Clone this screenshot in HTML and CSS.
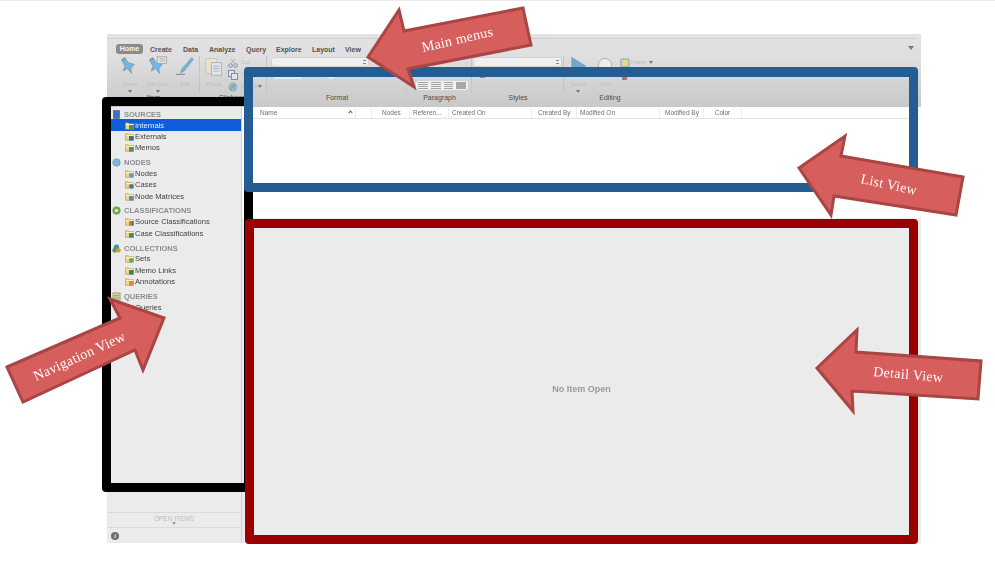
FILE: index.html
```html
<!DOCTYPE html>
<html lang="en">
<head>
<meta charset="utf-8">
<title>Workspace overview</title>
<link rel="stylesheet" href="styles.css">
</head>
<body>
<svg class="sprite" width="0" height="0" aria-hidden="true">
  <symbol id="folder" viewBox="0 0 10 10">
    <path d="M.5 2h3.2l.8 1h5v6.2H.5z" fill="#f3d57a" stroke="#9a8a5a" stroke-width=".6"/>
    <rect x="1" y="3.4" width="8.400" height="1.100" fill="#fff2c4"/>
  </symbol>
  <symbol id="pin" viewBox="0 0 24 24">
    <path d="M2 5l5-1 3 4 7 2-4 5 1 6-5-6-5 3 2-6z" fill="#62afe4" stroke="#4f7894" stroke-width=".7"/>
    <path d="M2 5c1-2 4-3 5-2" fill="none" stroke="#555" stroke-width="1.200"/>
  </symbol>
</svg>

<div class="window">
  <header class="ribbon">
    <div class="strip"><span class="collapse"></span></div>
    <nav class="tabs">
      <span class="tab active">Home</span>
      <span class="tab t-create">Create</span>
      <span class="tab t-data">Data</span>
      <span class="tab t-analyze">Analyze</span>
      <span class="tab t-query">Query</span>
      <span class="tab t-explore">Explore</span>
      <span class="tab t-layout">Layout</span>
      <span class="tab t-view">View</span>
    </nav>
    <div class="groups">
      <section class="group g-item">
        <div class="tools">
          <div class="tool">
            <svg class="big" viewBox="0 0 24 24"><use href="#pin"/></svg>
            <span class="tlabel">Open</span><span class="caret"></span>
          </div>
          <div class="tool">
            <svg class="big" viewBox="0 0 24 24">
              <use href="#pin"/>
              <rect x="11" y="1" width="11" height="8" fill="#e4e4e4" stroke="#8a8a8a" stroke-width=".8"/>
              <path d="M14 3.500h6M14 6h6" stroke="#8a8a8a" stroke-width=".8"/>
            </svg>
            <span class="tlabel">Get Info</span><span class="caret"></span>
          </div>
          <div class="tool">
            <svg class="big" viewBox="0 0 24 24">
              <path d="M20 2l2 2-11 14-4 2 1-4z" fill="#62afe4" stroke="#4f7894" stroke-width=".7"/>
              <path d="M1 22h11" stroke="#666" stroke-width="1"/>
            </svg>
            <span class="tlabel">Edit</span>
          </div>
        </div>
        <div class="glabel">Item</div>
      </section>
      <section class="group g-clip">
        <div class="tools">
          <div class="tool">
            <svg class="big faded" viewBox="0 0 24 24">
              <rect x="2" y="3" width="14" height="18" rx="1" fill="#eee6c4" stroke="#b7b09a"/>
              <rect x="9" y="8" width="12" height="15" fill="#e8eef4" stroke="#7f93ad"/>
              <path d="M11 12h8M11 15h8M11 18h8" stroke="#7f93ad"/>
            </svg>
            <span class="tlabel">Paste</span>
          </div>
          <div class="smalls">
            <div class="small">
              <svg class="faded" viewBox="0 0 10 10"><circle cx="2.500" cy="7.500" r="1.800" fill="none" stroke="#556a86"/><circle cx="7.500" cy="7.500" r="1.800" fill="none" stroke="#556a86"/><path d="M3 6l4-5M7 6L3 1" stroke="#8a8a8a" stroke-width=".7"/></svg>
              <span class="tlabel">Cut</span>
            </div>
            <div class="small">
              <svg class="faded" viewBox="0 0 10 10"><rect x=".5" y=".5" width="6" height="6" fill="#e8eef4" stroke="#556a86"/><rect x="3.500" y="3.500" width="6" height="6" fill="#e8eef4" stroke="#556a86"/></svg>
              <span class="tlabel">Copy</span>
            </div>
            <div class="small">
              <svg class="faded" viewBox="0 0 10 10"><circle cx="5" cy="5" r="4.500" fill="#6fa8c8"/><path d="M2 8l5-6" stroke="#6a9a55" stroke-width="1.600"/></svg>
              <span class="tlabel">Merge</span><span class="caret dark pull"></span>
            </div>
          </div>
        </div>
        <div class="glabel">Clipboard</div>
      </section>
      <section class="group g-format">
        <div class="tools">
          <div class="stack">
            <div class="combo"><span class="spin"></span></div>
            <div class="btnrow"><span class="btn b-wide"></span><span class="btn b-narrow"></span></div>
          </div>
        </div>
        <div class="glabel">Format</div>
      </section>
      <section class="group g-para">
        <div class="tools">
          <div class="segs">
            <span class="seg"></span><span class="seg"></span><span class="seg"></span><span class="seg on"></span>
          </div>
        </div>
        <div class="glabel">Paragraph</div>
      </section>
      <section class="group g-styles">
        <div class="tools">
          <div class="stack">
            <div class="combo"><span class="spin"></span></div>
            <span class="mark m-blue"></span>
          </div>
        </div>
        <div class="glabel">Styles</div>
      </section>
      <section class="group g-edit">
        <div class="tools">
          <div class="tool">
            <svg class="big" viewBox="0 0 24 24"><path d="M4 1l18 11L4 23z" fill="#5f9fc6"/></svg>
            <span class="tlabel">Select</span><span class="caret"></span>
          </div>
          <div class="tool">
            <svg class="big" viewBox="0 0 24 24"><circle cx="12" cy="11" r="8" fill="#eef0f2" stroke="#9a9a9a"/></svg>
            <span class="tlabel">Find</span>
          </div>
          <div class="stack">
            <div class="small insert">
              <svg viewBox="0 0 10 10"><rect x="1" y="1" width="8" height="8" rx="1" fill="#efd488" stroke="#6fa8c8"/></svg>
              <span class="tlabel">Insert</span><span class="caret dark"></span>
            </div>
            <span class="mark m-red"></span>
          </div>
        </div>
        <div class="glabel">Editing</div>
      </section>
    </div>
  </header>

  <div class="body-row">
    <aside class="sidebar">
      <div class="nav">
        <div class="sect">
          <div class="head"><svg viewBox="0 0 10 10"><rect x="1.500" y=".5" width="7" height="9" fill="#3f6dc4" stroke="#2f4f94" stroke-width=".5"/></svg>SOURCES</div>
          <div class="item sel"><svg viewBox="0 0 10 10"><use href="#folder"/><rect x="4.500" y="4.500" width="5" height="5" fill="#4c8f4c"/></svg>Internals</div>
          <div class="item"><svg viewBox="0 0 10 10"><use href="#folder"/><rect x="4.500" y="4.500" width="5" height="5" fill="#3f6d8f"/></svg>Externals</div>
          <div class="item"><svg viewBox="0 0 10 10"><use href="#folder"/><rect x="4.500" y="4.500" width="5" height="5" fill="#4f8f5f"/></svg>Memos</div>
        </div>
        <div class="sect">
          <div class="head"><svg viewBox="0 0 10 10"><circle cx="5" cy="5" r="4.200" fill="#7fb6d8" stroke="#5a88a8" stroke-width=".6"/></svg>NODES</div>
          <div class="item"><svg viewBox="0 0 10 10"><use href="#folder"/><circle cx="7" cy="7" r="2.600" fill="#5b9fce"/></svg>Nodes</div>
          <div class="item"><svg viewBox="0 0 10 10"><use href="#folder"/><circle cx="7" cy="7" r="2.600" fill="#5a6fae"/></svg>Cases</div>
          <div class="item"><svg viewBox="0 0 10 10"><use href="#folder"/><rect x="4.500" y="4.500" width="5" height="5" fill="#4f8faa"/></svg>Node Matrices</div>
        </div>
        <div class="sect">
          <div class="head"><svg viewBox="0 0 10 10"><circle cx="5" cy="5" r="4.200" fill="#6fb050" stroke="#4d8a38" stroke-width=".6"/><circle cx="5" cy="5" r="1.700" fill="#e8eee0"/></svg>CLASSIFICATIONS</div>
          <div class="item"><svg viewBox="0 0 10 10"><use href="#folder"/><rect x="4.500" y="4.500" width="2.500" height="5" fill="#d4762c"/><rect x="7" y="4.500" width="2.500" height="5" fill="#3f6d9f"/></svg>Source Classifications</div>
          <div class="item"><svg viewBox="0 0 10 10"><use href="#folder"/><rect x="4.500" y="4.500" width="5" height="5" fill="#4f7f6f"/></svg>Case Classifications</div>
        </div>
        <div class="sect">
          <div class="head"><svg viewBox="0 0 10 10"><circle cx="5" cy="3.500" r="3" fill="#3f8fc0"/><circle cx="3" cy="7" r="2.600" fill="#4f9f4f"/><circle cx="7.200" cy="7" r="2.600" fill="#d9a030"/></svg>COLLECTIONS</div>
          <div class="item"><svg viewBox="0 0 10 10"><use href="#folder"/><circle cx="7" cy="7" r="2.600" fill="#5fae5f"/></svg>Sets</div>
          <div class="item"><svg viewBox="0 0 10 10"><use href="#folder"/><rect x="4.500" y="4.500" width="5" height="5" fill="#3f7f5f"/></svg>Memo Links</div>
          <div class="item"><svg viewBox="0 0 10 10"><use href="#folder"/><rect x="4.500" y="4.500" width="5" height="5" fill="#d98a3a"/></svg>Annotations</div>
        </div>
        <div class="sect">
          <div class="head"><svg viewBox="0 0 10 10"><rect x="1" y="1" width="8" height="8" fill="#cfcf9f" stroke="#8a8a5f" stroke-width=".7"/><path d="M2 4h6M2 6.500h6" stroke="#8a8a5f" stroke-width=".7"/></svg>QUERIES</div>
          <div class="item"><svg viewBox="0 0 10 10"><use href="#folder"/></svg>Queries</div>
        </div>
      </div>
      <div class="open-items"><span>OPEN ITEMS</span><i class="caret"></i></div>
      <div class="status"><span class="info">i</span></div>
    </aside>
    <main class="main">
      <div class="list">
        <div class="cols">
          <span class="col c-name">Name<i class="sort"></i></span>
          <span class="col c-blank"></span>
          <span class="col c-nodes">Nodes</span>
          <span class="col c-ref">Referen...</span>
          <span class="col c-date">Created On</span>
          <span class="col c-by">Created By</span>
          <span class="col c-date">Modified On</span>
          <span class="col c-mby">Modified By</span>
          <span class="col c-color">Color</span>
        </div>
      </div>
      <div class="detail">No Item Open</div>
    </main>
  </div>
</div>

<div class="frame f-nav"></div>
<div class="frame f-list"></div>
<div class="frame f-detail"></div>

<svg class="callouts" viewBox="0 0 995 566" width="995" height="566">
  <g class="arrow">
    <polygon points="368,57 399,10 404,31 523,8 531,45 408,69 414,87"/>
    <text transform="translate(423 52) rotate(-13)">Main menus</text>
  </g>
  <g class="arrow">
    <polygon points="799,168 845,136 841,156 963,177 956,215 834,196 831,215"/>
    <text transform="translate(860 183) rotate(12)">List View</text>
  </g>
  <g class="arrow">
    <polygon points="817,368 857,330 856,352 981,361 978,399 852,391 853,411"/>
    <text transform="translate(873 376) rotate(5)">Detail View</text>
  </g>
  <g class="arrow">
    <polygon points="7,367 120,318 110,299 164,318 143,370 135,350 23,402"/>
    <text transform="translate(36 381) rotate(-24.500)">Navigation View</text>
  </g>
</svg>
</body>
</html>
```

FILE: styles.css
```css
* { box-sizing: border-box; }

html, body { margin: 0; height: 100%; }

body {
  position: relative;
  width: 995px;
  height: 566px;
  overflow: hidden;
  background: #fff;
  border-top: 1px solid #ececec;
  font-family: "Liberation Sans", Arial, sans-serif;
  color: #444;
}

.sprite { position: absolute; }

.window {
  display: flex;
  flex-direction: column;
  width: 814px;
  height: 509px;
  margin: 33px 0 0 107px;
  filter: blur(.35px);
}

/* Ribbon */
.ribbon {
  flex: 0 0 73px;
  display: flex;
  flex-direction: column;
  background: linear-gradient(#e3e2e4, #dedddf 35%, #c9c9c9);
}

.strip {
  position: relative;
  height: 5px;
  margin-right: 5px;
  border-bottom: 1px solid #cfcfcf;
}

.collapse {
  position: absolute;
  top: 12px;
  right: 2px;
  border: 3px solid transparent;
  border-top: 4px solid #777;
  border-bottom: 0;
}

.tabs {
  display: flex;
  align-items: center;
  height: 10px;
  margin-top: 5px;
  padding-left: 9px;
  font-size: 7px;
  font-weight: bold;
  color: #555;
}

.tab { white-space: nowrap; }

.tab.active {
  width: 27px;
  height: 10px;
  margin-right: 7px;
  border-radius: 3px;
  background: #8b8b8b;
  color: #f4f4f4;
  text-align: center;
  line-height: 10px;
}

.t-create { width: 33px; }
.t-data { width: 26px; }
.t-analyze { width: 37px; }
.t-query { width: 30px; }
.t-explore { width: 36px; }
.t-layout { width: 33px; }

.groups {
  display: flex;
  margin-top: 2px;
  font-size: 6px;
}

.group { flex: none; }
.g-item { width: 93px; }
.g-clip { width: 67px; }
.g-format { width: 140px; }
.g-para { width: 65px; }
.g-styles { width: 92px; }
.g-edit { width: 100px; }

.tools {
  display: flex;
  height: 37px;
  border-right: 1px solid #c4c4c4;
}

.g-item .tools { padding-left: 9px; }

.tool {
  position: relative;
  display: flex;
  flex-direction: column;
  align-items: center;
  width: 28px;
}

.big { width: 20px; height: 20px; margin-bottom: 5px; opacity: .85; }
.faded { opacity: .65; }

.tlabel { color: #bdbdbd; line-height: 7px; }

.caret {
  display: block;
  width: 0;
  margin-top: 2px;
  border: 2px solid transparent;
  border-top: 3px solid #777;
  border-bottom: 0;
}

.caret.dark { margin: 0 0 0 2px; }
.caret.pull { margin-left: -3px; }

.smalls {
  display: flex;
  flex-direction: column;
  gap: 1px;
  padding-top: 1px;
}

.small {
  display: flex;
  align-items: center;
  gap: 3px;
  height: 11px;
}

.small svg { width: 10px; height: 10px; flex: none; }

.stack { display: flex; flex-direction: column; }

.combo {
  position: relative;
  width: 96px;
  height: 8px;
  margin: 2px 0 0 5px;
  border-radius: 2px;
  background: #efefef;
  box-shadow: 0 0 0 .5px #c8c8c8;
}

.g-styles .combo { width: 87px; margin-left: 2px; }

.spin {
  position: absolute;
  top: 2px;
  right: 2px;
  width: 3px;
  height: 4px;
  border-top: 1px solid #888;
  border-bottom: 1px solid #888;
}

.btnrow {
  display: flex;
  gap: 25px;
  margin: 9px 0 0 7px;
}

.btn {
  height: 4px;
  border-radius: 0 0 2px 2px;
  background: #e8e8e8;
}

.b-wide { width: 28px; }
.b-narrow { width: 8px; }

.mark { display: block; width: 5px; height: 3px; }
.m-blue { margin: 9px 0 0 8px; background: #6f8fc0; }
.m-red { margin: 9px 0 0 3px; background: #c46a5a; }

.segs {
  display: flex;
  align-self: flex-end;
  width: 52px;
  height: 9px;
  margin: 0 0 3px 9px;
  padding: 1px 2px;
  border-radius: 3px;
  background: #f1f1f1;
  gap: 3px;
}

.seg {
  flex: 1;
  background: repeating-linear-gradient(#a4a4a4 0 1px, transparent 1px 2px);
}

.seg.on { background: #a8a8a8; }

.g-edit .tools { border-right: 0; }
.g-edit .tool + .tool { margin-left: -1px; }
.insert { gap: 1px; margin-top: 1px; margin-left: 1px; }

.glabel {
  font-size: 7px;
  line-height: 9px;
  color: #4c4c4c;
  text-align: center;
}

.g-edit .glabel { padding-right: 8px; }

/* Body */
.body-row { flex: 1; display: flex; min-height: 0; }

.sidebar {
  flex: 0 0 135px;
  display: flex;
  flex-direction: column;
  background: #ebebeb;
  border-right: 1px solid #cfcfcf;
}

.nav { flex: 1; padding-top: 1.900px; }

.sect { margin-bottom: 4px; }

.head, .item {
  display: flex;
  align-items: center;
  white-space: nowrap;
}

.head {
  height: 10.500px;
  padding-left: 5px;
  font-size: 7.500px;
  font-weight: bold;
  color: #8f8b93;
}

.head svg { width: 9px; height: 9px; margin-right: 3px; flex: none; }

.item {
  height: 11.300px;
  padding-left: 18px;
  font-size: 7.600px;
  color: #3f3f3f;
}

.item svg { width: 9px; height: 9px; margin-right: 1px; flex: none; }

.item.sel { background: #0f5dd8; color: #eaf1fc; }

.open-items {
  flex: 0 0 16px;
  display: flex;
  flex-direction: column;
  align-items: center;
  justify-content: center;
  border-top: 1px solid #dadada;
  border-bottom: 1px solid #dadada;
  font-size: 6.500px;
  color: #bcbcbc;
}

.open-items .caret { margin-top: 0; border-top-color: #999; }

.status {
  flex: 0 0 15px;
  display: flex;
  align-items: center;
  padding-left: 4px;
}

.info {
  width: 8px;
  height: 8px;
  border-radius: 50%;
  background: #707070;
  color: #eee;
  font: italic bold 6px/8px "Liberation Serif", serif;
  text-align: center;
}

.main { flex: 1; display: flex; flex-direction: column; min-width: 0; }

.list { flex: 0 0 111px; background: #fff; }

.cols {
  display: flex;
  height: 12px;
  padding-left: 16px;
  border-bottom: 1px solid #e4e4e4;
  font-size: 6.500px;
  line-height: 11px;
  color: #6f6f6f;
}

.col {
  position: relative;
  flex: none;
  padding: 0 3px;
  border-right: 1px solid #eeeeee;
  white-space: nowrap;
}

.c-name { width: 98px; padding-left: 2px; }
.c-blank { width: 16px; }
.c-nodes { width: 38px; padding-left: 10px; }
.c-ref { width: 39px; }
.c-date { width: 83px; }
.c-by { width: 45px; padding-left: 6px; }
.c-mby { width: 44px; padding-left: 5px; }
.c-color { width: 38px; text-align: center; }

.sort {
  position: absolute;
  top: 4px;
  right: 3px;
  width: 3px;
  height: 3px;
  border-top: 1px solid #555;
  border-left: 1px solid #555;
  transform: rotate(45deg);
}

.detail {
  flex: 1;
  display: flex;
  align-items: center;
  justify-content: center;
  padding-top: 16px;
  background: #ebebeb;
  font-size: 9px;
  font-weight: bold;
  color: #9b9b9b;
}

/* Callout frames over the screenshot */
.frame {
  position: absolute;
  border: 9px solid;
  border-radius: 4px;
  pointer-events: none;
}

.f-nav { left: 102px; top: 96px; width: 151px; height: 395px; border-color: #000; }
.f-list { left: 244px; top: 66px; width: 674px; height: 125px; border-color: #245c94; border-top-width: 10px; }
.f-detail { left: 245px; top: 218px; width: 673px; height: 325px; border-color: #9b0000; }

.callouts { position: absolute; left: 0; top: -1px; }

.arrow polygon {
  fill: #d65e5c;
  stroke: #a94543;
  stroke-width: 3;
}

.arrow text {
  fill: #fff;
  font-family: "Liberation Serif", "Times New Roman", serif;
  font-size: 14px;
  letter-spacing: .3px;
}
```
